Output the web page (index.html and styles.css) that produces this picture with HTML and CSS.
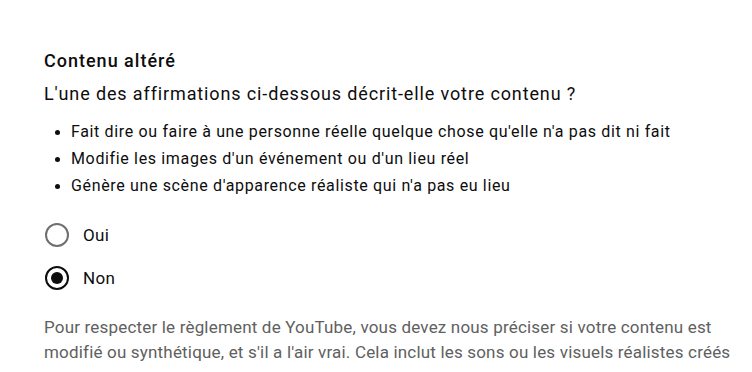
FILE: index.html
```html
<!DOCTYPE html>
<html lang="fr">
<head>
  <meta charset="UTF-8" />
  <title>Contenu altéré</title>
  <link rel="stylesheet" href="styles.css">
</head>
<body>

<div class="section">
  <h3 class="title">Contenu altéré</h3>
  <p class="question">L'une des affirmations ci-dessous décrit-elle votre contenu ?</p>

  <ul class="points">
    <li>Fait dire ou faire à une personne réelle quelque chose qu'elle n'a pas dit ni fait</li>
    <li>Modifie les images d'un événement ou d'un lieu réel</li>
    <li>Génère une scène d'apparence réaliste qui n'a pas eu lieu</li>
  </ul>

  <div class="choices">
    <label class="choice">
      <span class="radio"></span>
      <span>Oui</span>
    </label>
    <label class="choice">
      <span class="radio checked"></span>
      <span>Non</span>
    </label>
  </div>

  <p class="note">Pour respecter le règlement de YouTube, vous devez nous préciser si votre contenu est modifié ou synthétique, et s'il a l'air vrai. Cela inclut les sons ou les visuels réalistes créés</p>
</div>

</body>
</html>
```

FILE: styles.css
```css
body {
  font-family: Roboto, 'Noto Sans', sans-serif;
  background: #fff;
  color: #0d0d0d;
  margin: 0;
}

.section {
  padding: 49px 0 0 44px;
  width: 700px;
}

.title {
  font-size: 18px;
  font-weight: 500;
  letter-spacing: 1px;
  margin: 0;
  line-height: 24px;
}

.question {
  font-size: 18px;
  letter-spacing: 0.87px;
  margin: 8px 0 0;
  line-height: 26px;
}

.points {
  margin: 11px 0 0;
  padding: 0 0 0 27px;
  font-size: 16px;
  letter-spacing: 0.65px;
  line-height: 27px;
}

.points li::marker {
  font-size: 15px;
}

.choices {
  display: flex;
  flex-direction: column;
  gap: 19px;
  margin-top: 24px;
}

.choice {
  display: flex;
  align-items: center;
  gap: 14px;
  font-size: 17px;
  letter-spacing: 0.4px;
}

.radio {
  width: 20px;
  height: 20px;
  margin-left: 1px;
  border: 2px solid #6f6f6f;
  border-radius: 50%;
  display: flex;
  align-items: center;
  justify-content: center;
}

.radio.checked {
  border-color: #0d0d0d;
}

.radio.checked::after {
  content: '';
  width: 12px;
  height: 12px;
  border-radius: 50%;
  background: #0d0d0d;
}

.note {
  color: #606060;
  font-size: 17px;
  letter-spacing: 0.18px;
  line-height: 25px;
  margin: 25px 0 0;
}
```
